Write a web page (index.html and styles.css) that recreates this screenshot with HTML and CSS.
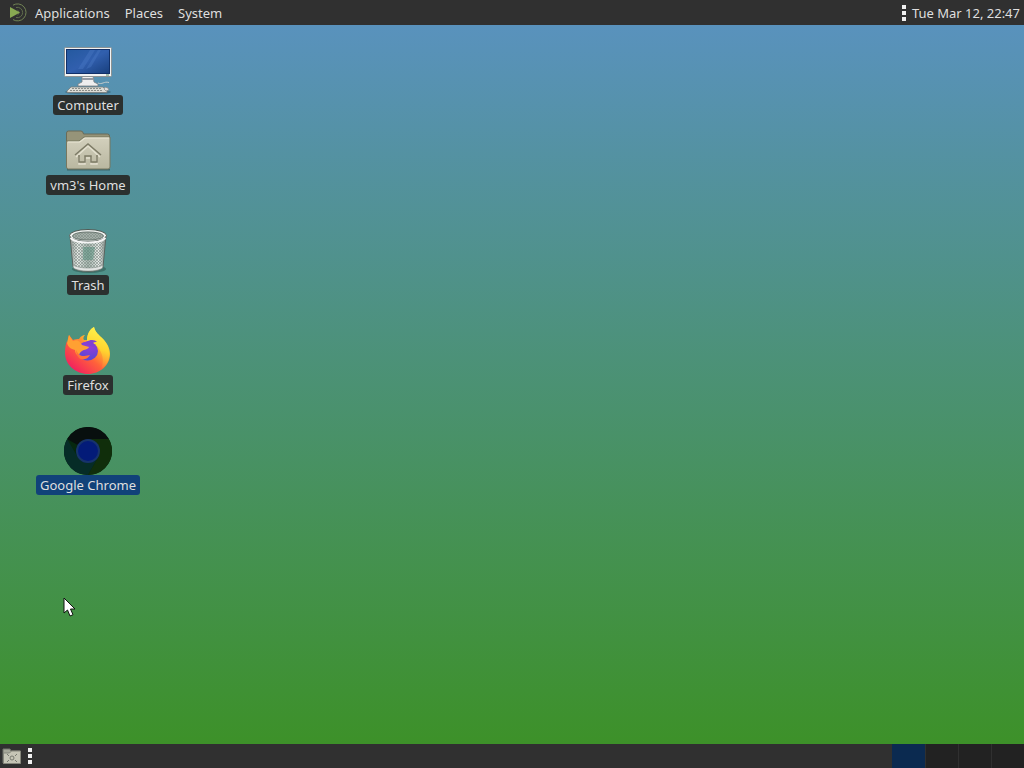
FILE: index.html
```html
<!DOCTYPE html>
<html lang="en">
<head>
<meta charset="utf-8">
<meta name="viewport" content="width=device-width, initial-scale=1">
<title>Desktop</title>
<link rel="stylesheet" href="styles.css">
</head>
<body>
<header class="panel panel-top">
  <nav class="menubar">
    <button class="menu menu-main" type="button">
      <svg class="logo" viewBox="0 0 20 20" aria-hidden="true">
        <g fill="none" stroke="#718454" stroke-width="1">
          <path d="M5 2.200A8.500 8.500 0 1 1 5 16.600"/>
          <path d="M8 4.500A5.200 5.200 0 1 1 8 14.500" stroke="#606e4c"/>
          <path d="M9.500 7.200A2.700 2.700 0 0 1 9.500 12" stroke="#66764f"/>
        </g>
        <path d="M2 4l10 5.500L2 15z" fill="#88a952"/>
      </svg>
      <span>Applications</span>
    </button>
    <button class="menu" type="button">Places</button>
    <button class="menu" type="button">System</button>
  </nav>
  <div class="status">
    <span class="grip"><i></i><i></i><i></i></span>
    <button class="clock" type="button">Tue Mar 12, 22:47</button>
  </div>
</header>

<main class="desktop">
  <div class="icons">
    <button class="item" type="button">
      <svg class="picture" viewBox="0 0 48 48" aria-hidden="true">
        <defs>
          <linearGradient id="screen" x1="0" y1="0" x2="1" y2="1"><stop offset="0" stop-color="#24599f"/><stop offset=".5" stop-color="#315fae"/><stop offset="1" stop-color="#183f7d"/></linearGradient>
        </defs>
        <ellipse cx="24" cy="45" rx="23" ry="2.5" fill="#24434c" opacity=".35"/>
        <path d="M18 29h11l1 6 4 2v2H14v-2l4-2z" fill="#eee" stroke="#787e82" stroke-width=".8"/>
        <path d="M18 31h11l.4 2H17.7z" fill="#9499a2"/>
        <path d="M34 36c4 2 6-2 11-.5" fill="none" stroke="#c4cccc" stroke-width="1"/>
        <rect x=".5" y=".5" width="47" height="29" rx="1" fill="#f1f2f2" stroke="#8b9294"/>
        <rect x="2.5" y="2.5" width="43" height="24" fill="url(#screen)" stroke="#102f68"/>
        <path d="M14 22L26 3h5L19 22zM22 22L34 3h3L27 20z" fill="#4b7ac5" opacity=".4"/>
        <path d="M42 28h3" stroke="#586" stroke-width="1"/>
        <path d="M7 40h32l4 4v1.500H3V44z" fill="#dcdcd5" stroke="#777b78" stroke-width=".8"/>
        <path d="M8 41.500h29M6 43.500h33" stroke="#8b8e89" stroke-width="1" stroke-dasharray="2 1"/>
        <path d="M41 40l3 1 1 2-3 1-2-2z" fill="#ddd" stroke="#828584" stroke-width=".7"/>
      </svg>
      <span class="caption">Computer</span>
    </button>
    <button class="item item-home" type="button">
      <svg class="picture" viewBox="0 0 48 48" aria-hidden="true">
        <defs>
          <linearGradient id="folder" x1="0" y1="0" x2="0" y2="1"><stop offset="0" stop-color="#d3d0bd"/><stop offset="1" stop-color="#b9b7a0"/></linearGradient>
        </defs>
        <path d="M3 42h43v1.500H3z" fill="#263b39" opacity=".5"/>
        <path d="M2.500 40V6q0-2 2-2H17q2 0 2.500 3h24q2 0 2 2v31z" fill="#969479" stroke="#6a6b58"/>
        <path d="M3 14h12l5-4h26v30q0 2-2 2H4.500q-2 0-2-2V14z" fill="url(#folder)" stroke="#77775f"/>
        <path d="M4 15h12l5-4h24" fill="none" stroke="#ebe8d6"/>
        <path d="M12 29l12-11 12 11M15 29v7h6v-6h6v6h6v-7" fill="none" stroke="#e4e0cf" stroke-width="1.500" transform="translate(0 1)"/>
        <path d="M11 28l13-11 13 11M15 28v7h6v-6h6v6h6v-7" fill="none" stroke="#7d7b66" stroke-width="1.500"/>
      </svg>
      <span class="caption">vm3's Home</span>
    </button>
    <button class="item" type="button">
      <svg class="picture" viewBox="0 0 48 48" aria-hidden="true">
        <defs>
          <pattern id="mesh" width="3" height="3" patternUnits="userSpaceOnUse"><path d="M0 0l3 3M3 0L0 3" stroke="#7d8b84" stroke-width=".6"/></pattern>
          <linearGradient id="bin"><stop offset="0" stop-color="#8e9692"/><stop offset=".22" stop-color="#e4e8e5"/><stop offset=".5" stop-color="#a3b4ac"/><stop offset=".8" stop-color="#e6e9e7"/><stop offset="1" stop-color="#7b8580"/></linearGradient>
        </defs>
        <ellipse cx="25" cy="42" rx="17" ry="4" fill="#243f36" opacity=".4"/>
        <path d="M6 9l3 31c3 6 27 6 30 0l3-31z" fill="url(#bin)" stroke="#59645f"/>
        <path d="M8 15l2.500 24c5 4 22 4 27 0L40 15z" fill="url(#mesh)"/>
        <path d="M19 20h12l-2 13H19z" fill="#548d7c" opacity=".5"/>
        <path d="M9 38c6 4 24 4 30 0l-.5 3c-5 4-24 4-29 0z" fill="#e2e5e3" stroke="#75807a" stroke-width=".5"/>
        <ellipse cx="24" cy="8.500" rx="18.500" ry="6" fill="#edf0ee" stroke="#4f5a55"/>
        <ellipse cx="24" cy="9" rx="15.500" ry="4" fill="#a4afa9" stroke="#63706a"/>
        <ellipse cx="24" cy="9" rx="15.500" ry="4" fill="url(#mesh)"/>
        <path d="M6.500 11c6 6 29 6 35 0" fill="none" stroke="#f5f5f5" stroke-width="2"/>
      </svg>
      <span class="caption">Trash</span>
    </button>
    <button class="item" type="button">
      <svg class="picture" viewBox="0 0 48 48" aria-hidden="true">
        <defs>
          <linearGradient id="fire" x1=".85" y1=".1" x2=".2" y2=".9"><stop offset="0" stop-color="#fff04a"/><stop offset=".3" stop-color="#ffb92d"/><stop offset=".6" stop-color="#ff623a"/><stop offset="1" stop-color="#f3245e"/></linearGradient>
          <linearGradient id="tail" x1=".6" y1="0" x2=".4" y2="1"><stop offset="0" stop-color="#fff44f"/><stop offset=".5" stop-color="#ffd52f"/><stop offset="1" stop-color="#ff9139" stop-opacity="0"/></linearGradient>
          <radialGradient id="globe" cx=".65" cy=".15" r=".85"><stop offset="0" stop-color="#9b3bd8"/><stop offset="1" stop-color="#5547d4"/></radialGradient>
        </defs>
        <path d="M5 8l4 5c2-1 4-1 6-1 2-3 4-4 6-4-2 2-2 4-1 5h3c0-6 3-11 7-13 1 5 5 8 9 12 4 4 7 9 7 15 0 11-10 20-22 20S1 38 1 26c0-6 1-10 2-12 0 2 1 2 1 2-.5-3 0-5 1-8z" fill="url(#fire)"/>
        <path d="M23 14c0-7 3-12 7-14 1 5 5 8 9 12 9 10 8 24-2 30 5-10 0-25-14-28z" fill="url(#tail)"/>
        <ellipse cx="23.500" cy="24" rx="10.500" ry="9.500" fill="url(#globe)"/>
        <path d="M22 15c5-3 9-2 11 0-2 0-3 0-4 1l4 5-10-3z" fill="#8140d2"/>
        <path d="M5 8l4 6c4-2 7 0 9 4l7 2c-1 3-5 2-7 4-2 1-3 3-3 5-3-1-4-4-4-6-4-1-7-3-8-7z" fill="#ffa032"/>
        <path d="M12 23c2 4 4 6 8 6 3 0 4-1 6-1-2 4-7 6-11 3-2-2-3-5-3-8z" fill="#ff7139"/>
      </svg>
      <span class="caption">Firefox</span>
    </button>
    <button class="item item-selected" type="button">
      <svg class="picture" viewBox="0 0 48 48" aria-hidden="true">
        <circle cx="24" cy="24" r="24" fill="#06280f"/>
        <path d="M24 24L3.200 12A24 24 0 0 1 44.800 12z" fill="#080f0e"/>
        <path d="M3.200 12A24 24 0 0 0 24 48l10.400-18H13.600z" fill="#062c27"/>
        <path d="M24 12h20.800A24 24 0 0 1 24 48l10.400-18z" fill="#102e0b"/>
        <circle cx="24" cy="24" r="12" fill="#17336b"/>
        <circle cx="24" cy="24" r="10" fill="#031b78"/>
      </svg>
      <span class="caption">Google Chrome</span>
    </button>
  </div>
  <svg class="pointer" viewBox="0 0 14 20" aria-hidden="true">
    <path d="M1 1v15l3.500-3 2.500 6 3-1.300L7.500 12H12z" fill="#fff" stroke="#101510"/>
  </svg>
</main>

<footer class="panel panel-bottom">
  <button class="show-desktop" type="button" aria-label="Show desktop">
    <svg viewBox="0 0 20 20" aria-hidden="true">
      <path d="M1 17V3h7l1 2h9v12z" fill="#a6a799" stroke="#71736a"/>
      <path d="M1.500 7h6l2-2h9v12.500h-17z" fill="#c6c5b6" stroke="#86877c"/>
      <circle cx="10" cy="12" r="2" fill="none" stroke="#77796f"/>
      <path d="M5 8l2 2M15 8l-2 2M5 16l2-2M15 16l-2-2" stroke="#77796f"/>
    </svg>
  </button>
  <span class="grip"><i></i><i></i><i></i></span>
  <div class="workspaces">
    <button class="workspace workspace-current" type="button" aria-label="Workspace 1"></button>
    <button class="workspace" type="button" aria-label="Workspace 2"></button>
    <button class="workspace" type="button" aria-label="Workspace 3"></button>
    <button class="workspace" type="button" aria-label="Workspace 4"></button>
  </div>
</footer>
</body>
</html>
```

FILE: styles.css
```css
* {
  box-sizing: border-box;
}

body {
  margin: 0;
  min-height: 100vh;
  display: flex;
  flex-direction: column;
  background: linear-gradient(#5a92c2, #3c9124);
  color: #dfdfdf;
  font: 13px/20px "Noto Sans", sans-serif;
}

button {
  margin: 0;
  padding: 0;
  border: 0;
  background: none;
  color: inherit;
  font: inherit;
}

.panel {
  display: flex;
  align-items: center;
  background: #303030;
}

.panel-top {
  height: 25px;
  justify-content: space-between;
  padding: 0 4px 0 8px;
}

.menubar {
  display: flex;
  gap: 15px;
}

.menu-main {
  display: flex;
  align-items: center;
  gap: 7px;
}

.logo {
  width: 20px;
  height: 20px;
}

.status {
  display: flex;
  align-items: center;
  gap: 6px;
}

.grip {
  display: flex;
  flex-direction: column;
  gap: 2px;
}

.grip i {
  width: 4px;
  height: 4px;
  background: #f0f0f0;
}

.desktop {
  flex: 1;
  position: relative;
  padding: 22px 28px;
}

.icons {
  display: flex;
  flex-direction: column;
  gap: 32px;
  width: 120px;
}

.item {
  display: flex;
  flex-direction: column;
  align-items: center;
}

.item-home {
  margin-top: -20px;
}

.picture {
  width: 48px;
  height: 48px;
}

.caption {
  padding: 0 4px;
  border-radius: 3px;
  background: #2b302f;
  white-space: nowrap;
}

.item-selected .caption {
  background: #114279;
}

.pointer {
  position: absolute;
  left: 63px;
  top: 572px;
  width: 14px;
  height: 20px;
}

.panel-bottom {
  height: 24px;
  padding-left: 2px;
}

.show-desktop {
  width: 20px;
  height: 20px;
  margin-right: 6px;
}

.show-desktop svg {
  display: block;
}

.workspaces {
  display: flex;
  align-self: stretch;
  gap: 1px;
  margin-left: auto;
  background: #303030;
}

.workspace {
  width: 32px;
  background: #222;
}

.workspace-current {
  width: 33px;
  background: #0b2a50;
}
```
